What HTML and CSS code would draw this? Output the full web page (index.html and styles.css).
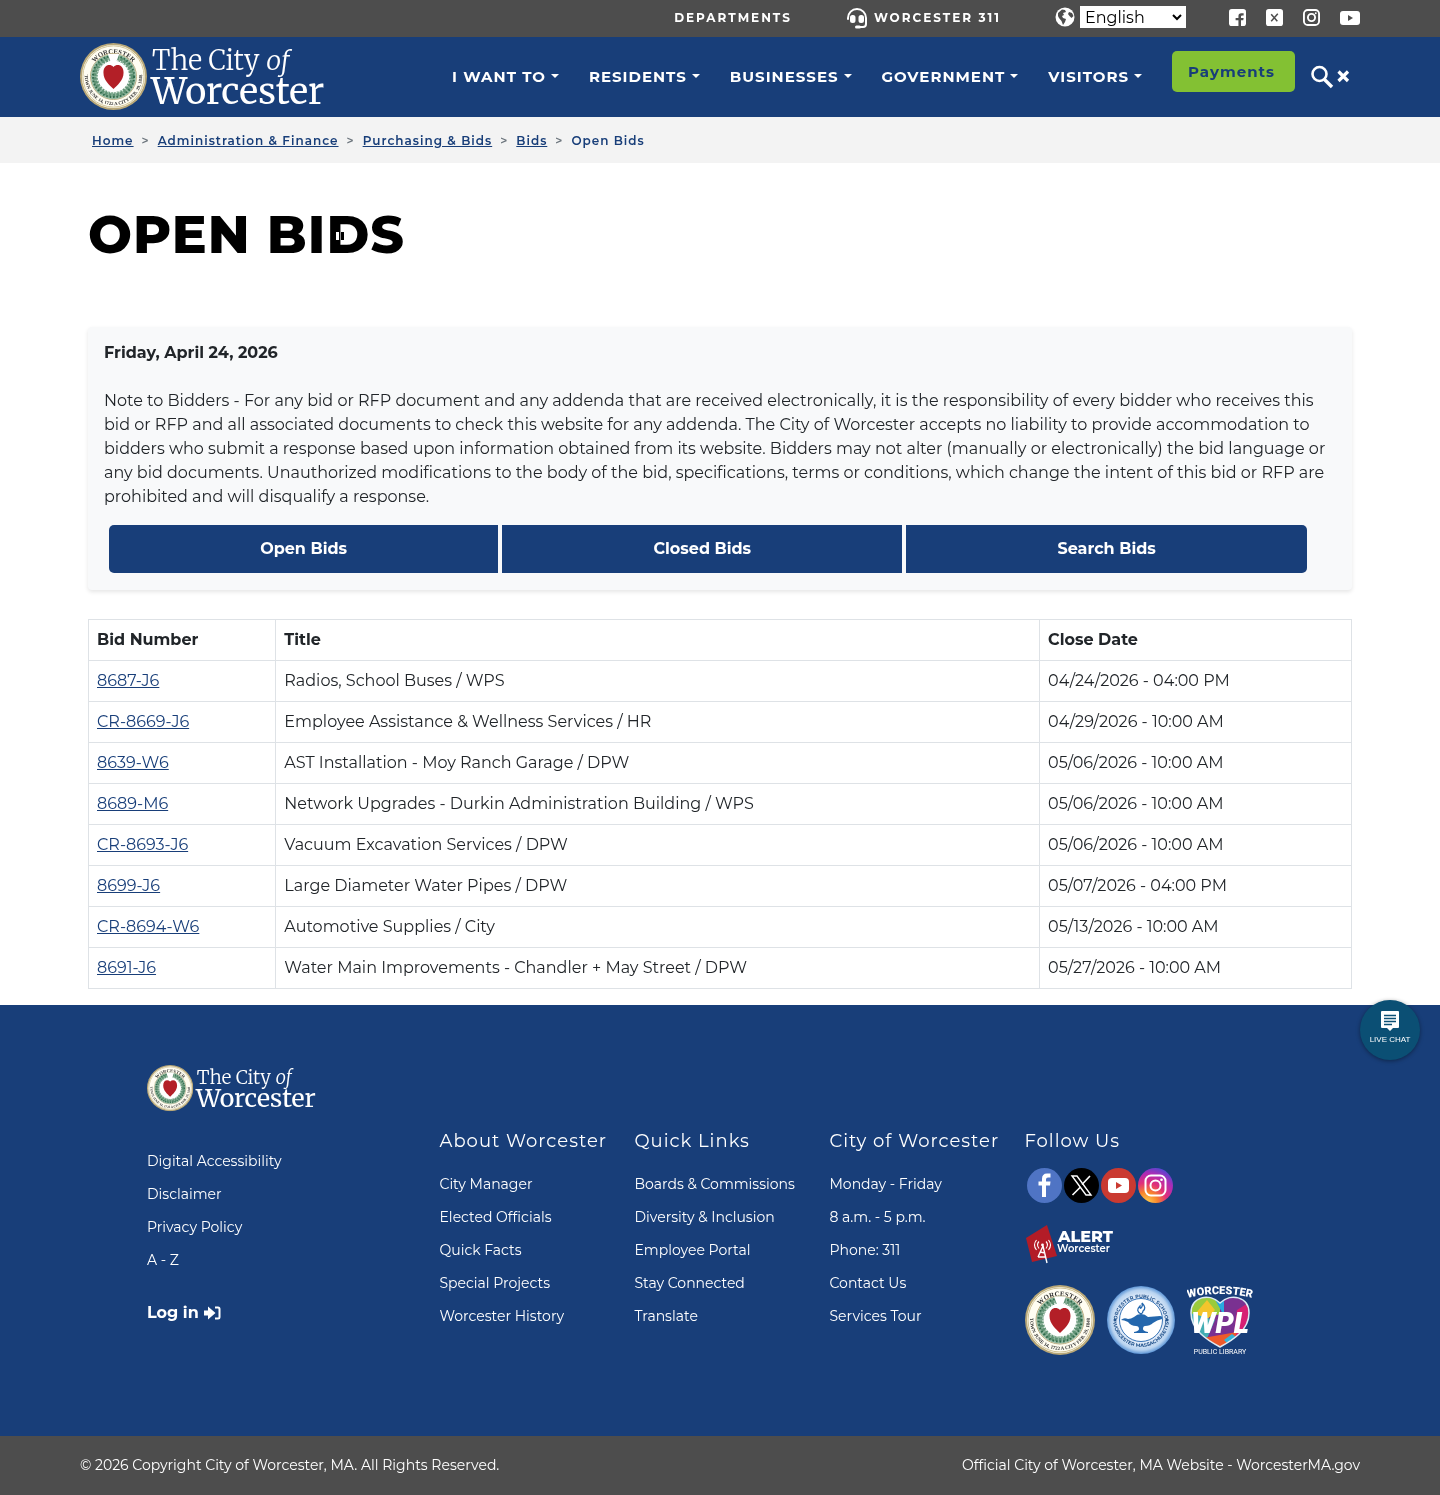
FILE: index.html
```html
<!DOCTYPE html>
<html lang="en">
<head>
  <meta charset="UTF-8">
  <meta name="viewport" content="width=device-width, initial-scale=1">
  <title>Open Bids | City of Worcester</title>
  <link rel="stylesheet" href="styles.css">
</head>
<body>

  <!-- Shared artwork -->
  <svg class="sprite" aria-hidden="true">
    <symbol id="seal" viewBox="0 0 70 70">
      <circle cx="35" cy="35" r="35" fill="#b9a878"/>
      <circle cx="35" cy="35" r="33" fill="#fffdf2"/>
      <circle cx="35" cy="35" r="32" fill="none" stroke="#cfc193" stroke-width="1"/>
      <path id="seal-top" d="M9 37 A26 26 0 1 1 61 37" fill="none"/>
      <path id="seal-bottom" d="M9 20 A30 30 0 1 0 61 20" fill="none"/>
      <text class="seal-text"><textPath href="#seal-top" startOffset="50%" text-anchor="middle">WORCESTER</textPath></text>
      <text class="seal-text seal-small"><textPath href="#seal-bottom" startOffset="50%" text-anchor="middle">TOWN JUNE 14, 1722 A CITY FEB. 29, 1848</textPath></text>
      <circle cx="35" cy="35" r="24" fill="#fff" stroke="#b9a878" stroke-width="1"/>
      <circle cx="35" cy="35" r="20" fill="none" stroke="#8fb59d" stroke-width="7"/>
      <circle cx="35" cy="35" r="19" fill="none" stroke="#5f9274" stroke-width="5" stroke-dasharray="2.6 1.4"/>
      <circle cx="35" cy="35" r="21.500" fill="none" stroke="#2f6a4b" stroke-width="2" stroke-dasharray="1.6 2"/>
      <circle cx="35" cy="35" r="17" fill="none" stroke="#dbe9df" stroke-width="1.500" stroke-dasharray="1.5 1.7"/>
      <path d="M29 11.500h12l-3 8h-6z" fill="#fff"/>
      <ellipse cx="35" cy="34.500" rx="14" ry="16" fill="#fff"/>
      <path d="M35 48c-4-4-10.500-9-10.500-17 0-8 6.500-10 10.500-6 4-4 10.500-2 10.500 6 0 8-6.500 13-10.500 17z" fill="#b31f27"/>
    </symbol>
    <symbol id="logo" viewBox="0 0 246 68">
      <use href="#seal" x="0" y="0" width="67" height="67"/>
      <text x="72" y="27" class="logo-text logo-city">The City <tspan font-style="italic">of</tspan></text>
      <text x="71" y="61" class="logo-text logo-name">Worcester</text>
    </symbol>
  </svg>

  <!-- Top bar -->
  <div class="topbar">
    <a class="top-link" href="#">DEPARTMENTS</a>
    <a class="top-link" href="#">
      <svg width="22" height="22" viewBox="0 0 22 22" fill="none" stroke="#fff" stroke-width="2">
        <path d="M2 12v-1a9 9 0 0 1 18 0v6q0 3-3 3h-5" stroke-linecap="round"/>
        <rect x="5" y="9" width="3.5" height="6" rx="1.5" fill="#fff"/>
        <rect x="13.5" y="9" width="3.5" height="6" rx="1.5" fill="#fff"/>
        <path d="M10.500 20h3" stroke-width="3" stroke-linecap="round"/>
      </svg>
      WORCESTER 311
    </a>
    <div class="language">
      <svg width="20" height="20" viewBox="0 0 20 20">
        <circle cx="10" cy="10" r="9.500" fill="#fff"/>
        <path d="M3 6l4-3.500 3 .5 1 2-3 1 1 2-2 1 1 2 3 1-1 3-2 3-1.500-4-2.500-3-1-2zM14 5l3 1 1.500 3-2 2-2-2-1.500-2z" fill="#4d4d4d"/>
      </svg>
      <select aria-label="Language">
        <option>English</option>
        <option>Español</option>
      </select>
    </div>
    <div class="top-social">
      <a href="#" aria-label="Facebook">
        <svg width="17" height="17" viewBox="0 0 18 18">
          <rect width="18" height="18" rx="3" fill="#fff"/>
          <path d="M10 18v-6H7V9.500h3V7.500Q10 4.500 13 4.500h2.500v2.300H14q-1.300 0-1.300 1v1.700h2.800l-.4 2.500h-2.400v6z" fill="#4d4d4d"/>
        </svg>
      </a>
      <a href="#" aria-label="X">
        <svg width="17" height="17" viewBox="0 0 18 18">
          <rect width="18" height="18" rx="3" fill="#fff"/>
          <path d="M5.500 5.500l6.500 7.500M12.500 5l-7 8" stroke="#4d4d4d" stroke-width="1.600"/>
        </svg>
      </a>
      <a href="#" aria-label="Instagram">
        <svg width="17" height="17" viewBox="0 0 18 18" fill="none" stroke="#fff">
          <rect x="1" y="1" width="16" height="16" rx="4" stroke-width="2"/>
          <circle cx="9" cy="9" r="3.800" stroke-width="2"/>
          <circle cx="13.500" cy="4.500" r="1" fill="#fff" stroke="none"/>
        </svg>
      </a>
      <a href="#" aria-label="YouTube">
        <svg width="20" height="17" viewBox="0 0 20 17">
          <rect y="2" width="20" height="14" rx="3" fill="#fff"/>
          <path d="M8 6l5 3-5 3z" fill="#4d4d4d"/>
        </svg>
      </a>
    </div>
  </div>

  <!-- Main navigation -->
  <header class="navbar">
    <a href="#" class="brand" aria-label="The City of Worcester"><svg class="logo"><use href="#logo"/></svg></a>
    <nav class="menu">
      <button type="button">I WANT TO</button>
      <button type="button">RESIDENTS</button>
      <button type="button">BUSINESSES</button>
      <button type="button">GOVERNMENT</button>
      <button type="button">VISITORS</button>
    </nav>
    <a class="payments" href="#">Payments</a>
    <button type="button" class="search" aria-label="Search">
      <svg width="39" height="24" viewBox="0 0 39 24" fill="none" stroke="#fff">
        <circle cx="8.500" cy="9" r="7" stroke-width="2.600"/>
        <path d="M13.500 14.500l7.500 7.500" stroke-width="3.300"/>
        <path d="M27.500 6.500l9.500 9.500M37 6.500l-9.500 9.500" stroke-width="3.200"/>
      </svg>
    </button>
  </header>

  <!-- Breadcrumbs -->
  <nav class="breadcrumb" aria-label="Breadcrumb">
    <a href="#">Home</a><i>&gt;</i>
    <a href="#">Administration &amp; Finance</a><i>&gt;</i>
    <a href="#">Purchasing &amp; Bids</a><i>&gt;</i>
    <a href="#">Bids</a><i>&gt;</i>
    <span>Open Bids</span>
  </nav>

  <main class="content">
    <div class="page-title">
      <h1>OPEN BIDS</h1>
      <button type="button" class="pause" aria-label="Pause"></button>
    </div>

    <section class="notice">
      <h2>Friday, April 24, 2026</h2>
      <p>Note to Bidders - For any bid or RFP document and any addenda that are received electronically, it is the responsibility of every bidder who receives this bid or RFP and all associated documents to check this website for any addenda. The City of Worcester accepts no liability to provide accommodation to bidders who submit a response based upon information obtained from its website. Bidders may not alter (manually or electronically) the bid language or any bid documents. Unauthorized modifications to the body of the bid, specifications, terms or conditions, which change the intent of this bid or RFP are prohibited and will disqualify a response.</p>
      <div class="bid-buttons">
        <a href="#">Open Bids</a>
        <a href="#">Closed Bids</a>
        <a href="#">Search Bids</a>
      </div>
    </section>

    <table class="bids">
      <thead>
        <tr><th>Bid Number</th><th>Title</th><th>Close Date</th></tr>
      </thead>
      <tbody>
        <tr><td><a href="#">8687-J6</a></td><td>Radios, School Buses / WPS</td><td>04/24/2026 - 04:00 PM</td></tr>
        <tr><td><a href="#">CR-8669-J6</a></td><td>Employee Assistance &amp; Wellness Services / HR</td><td>04/29/2026 - 10:00 AM</td></tr>
        <tr><td><a href="#">8639-W6</a></td><td>AST Installation - Moy Ranch Garage / DPW</td><td>05/06/2026 - 10:00 AM</td></tr>
        <tr><td><a href="#">8689-M6</a></td><td>Network Upgrades - Durkin Administration Building / WPS</td><td>05/06/2026 - 10:00 AM</td></tr>
        <tr><td><a href="#">CR-8693-J6</a></td><td>Vacuum Excavation Services / DPW</td><td>05/06/2026 - 10:00 AM</td></tr>
        <tr><td><a href="#">8699-J6</a></td><td>Large Diameter Water Pipes / DPW</td><td>05/07/2026 - 04:00 PM</td></tr>
        <tr><td><a href="#">CR-8694-W6</a></td><td>Automotive Supplies / City</td><td>05/13/2026 - 10:00 AM</td></tr>
        <tr><td><a href="#">8691-J6</a></td><td>Water Main Improvements - Chandler + May Street / DPW</td><td>05/27/2026 - 10:00 AM</td></tr>
      </tbody>
    </table>
  </main>

  <footer class="footer">
    <button type="button" class="live-chat">
      <svg width="20" height="20" viewBox="0 0 20 20">
        <path d="M2 0h16q1 0 1 1v15q0 1-1 1h-5l-3 3-3-3H2q-1 0-1-1V1q0-1 1-1z" fill="#fff"/>
        <path d="M4 4.500h12M4 7.500h12M4 10.500h12M4 13.500h8" stroke="#0b4f74" stroke-width="1.300"/>
      </svg>
      LIVE CHAT
    </button>

    <div class="footer-grid">
      <div class="footer-first">
        <svg class="footer-logo" role="img" aria-label="The City of Worcester"><use href="#logo"/></svg>
        <ul>
          <li><a href="#">Digital Accessibility</a></li>
          <li><a href="#">Disclaimer</a></li>
          <li><a href="#">Privacy Policy</a></li>
          <li><a href="#">A - Z</a></li>
        </ul>
        <a class="login" href="#">Log in
          <svg width="17" height="14" viewBox="0 0 17 14">
            <path d="M0 4.500h4V.5L11.500 7 4 13.500v-4H0z" fill="#fff"/>
            <path d="M11 1.500h3q1.500 0 1.500 1.500v8q0 1.500-1.500 1.500h-3" fill="none" stroke="#fff" stroke-width="2"/>
          </svg>
        </a>
      </div>
      <div class="footer-col">
        <h3>About Worcester</h3>
        <ul>
          <li><a href="#">City Manager</a></li>
          <li><a href="#">Elected Officials</a></li>
          <li><a href="#">Quick Facts</a></li>
          <li><a href="#">Special Projects</a></li>
          <li><a href="#">Worcester History</a></li>
        </ul>
      </div>
      <div class="footer-col">
        <h3>Quick Links</h3>
        <ul>
          <li><a href="#">Boards &amp; Commissions</a></li>
          <li><a href="#">Diversity &amp; Inclusion</a></li>
          <li><a href="#">Employee Portal</a></li>
          <li><a href="#">Stay Connected</a></li>
          <li><a href="#">Translate</a></li>
        </ul>
      </div>
      <div class="footer-col">
        <h3>City of Worcester</h3>
        <ul>
          <li>Monday - Friday</li>
          <li>8 a.m. - 5 p.m.</li>
          <li>Phone: 311</li>
          <li><a href="#">Contact Us</a></li>
          <li><a href="#">Services Tour</a></li>
        </ul>
      </div>
      <div class="footer-col">
        <h3>Follow Us</h3>
        <div class="follow">
          <a href="#" aria-label="Facebook">
            <svg width="35" height="35" viewBox="0 0 35 35">
              <circle cx="17.500" cy="17.500" r="17.500" fill="#4f74c4"/>
              <path d="M15 29V17.500h-3.500v-4H15V11q0-5.500 5-5.500h3.500v4H21q-2 0-2 2v2h4.500l-.5 4h-4V29z" fill="#fff"/>
            </svg>
          </a>
          <a href="#" aria-label="X">
            <svg width="35" height="35" viewBox="0 0 35 35" fill="none" stroke="#fff">
              <circle cx="17.500" cy="17.500" r="17.500" fill="#000" stroke="none"/>
              <path d="M8 8h5l14 19h-5z" stroke-width="1.400"/>
              <path d="M26 8l-8 8.500M16.500 19L8.500 27" stroke-width="1.600"/>
            </svg>
          </a>
          <a href="#" aria-label="YouTube">
            <svg width="35" height="35" viewBox="0 0 35 35">
              <circle cx="17.500" cy="17.500" r="17.500" fill="#ca3a31"/>
              <rect x="7" y="10" width="21" height="15" rx="4" fill="#fff"/>
              <path d="M15 14l6 3.500-6 3.500z" fill="#ca3a31"/>
            </svg>
          </a>
          <a href="#" aria-label="Instagram">
            <svg width="35" height="35" viewBox="0 0 35 35" fill="none" stroke="#fff">
              <defs>
                <radialGradient id="insta" cx=".25" cy="1" r="1.050">
                  <stop offset="0" stop-color="#ffd34f"/>
                  <stop offset=".3" stop-color="#f8842c"/>
                  <stop offset=".55" stop-color="#e0307a"/>
                  <stop offset=".8" stop-color="#b02bb4"/>
                  <stop offset="1" stop-color="#5a45d0"/>
                </radialGradient>
              </defs>
              <circle cx="17.500" cy="17.500" r="17.500" fill="url(#insta)" stroke="none"/>
              <rect x="7.500" y="7.500" width="20" height="20" rx="5.500" stroke-width="2"/>
              <circle cx="17.500" cy="17.500" r="5" stroke-width="2"/>
              <circle cx="23.500" cy="11.800" r="1.300" fill="#fff" stroke="none"/>
            </svg>
          </a>
        </div>
        <a class="alert" href="#" aria-label="Alert Worcester">
          <svg width="90" height="40" viewBox="0 0 90 40">
            <path d="M20 1l10 31-25 6L-1 14z" fill="#b31c27"/>
            <path d="M16 22l-5 11M16 22l4 17M13 28l5 1M11 33l7 0" stroke="#fff" stroke-width="1.400"/>
            <circle cx="15.500" cy="21" r="1.400" fill="#fff"/>
            <path d="M12 24.500q-3-4 0-7M9.500 26q-4-5 0-10M19 24.500q3-4 0-7M21.500 26q4-5 0-10" fill="none" stroke="#fff" stroke-width="1.100"/>
            <text x="31" y="18" class="mark-text alert-title">ALERT</text>
            <text x="30" y="28" class="mark-text alert-name">Worcester</text>
          </svg>
        </a>
        <div class="partners">
          <a href="#" aria-label="City seal"><svg width="70" height="70"><use href="#seal"/></svg></a>
          <a href="#" aria-label="Worcester Public Schools">
            <svg width="68" height="68" viewBox="0 0 68 68">
              <defs>
                <radialGradient id="school-ring">
                  <stop offset=".7" stop-color="#dfeaf8"/>
                  <stop offset=".88" stop-color="#b8d3f0"/>
                  <stop offset="1" stop-color="#5e96d6"/>
                </radialGradient>
              </defs>
              <circle cx="34" cy="34" r="34" fill="url(#school-ring)"/>
              <path id="wps-top" d="M10 36a24 24 0 1 1 48 0" fill="none"/>
              <path id="wps-bottom" d="M6 33a28 28 0 0 0 56 0" fill="none"/>
              <text class="school-text"><textPath href="#wps-top" startOffset="50%" text-anchor="middle">WORCESTER PUBLIC SCHOOLS</textPath></text>
              <text class="school-text"><textPath href="#wps-bottom" startOffset="50%" text-anchor="middle">WORCESTER MASSACHUSETTS</textPath></text>
              <circle cx="34" cy="34" r="21.500" fill="#fff" stroke="#3975b7" stroke-width="1"/>
              <circle cx="8" cy="34" r="1.500" fill="#24558e"/>
              <circle cx="60" cy="34" r="1.500" fill="#24558e"/>
              <path d="M14 34q3-3 7-1 3 0 6-2 3-3 7-3t7 3l12-1q3 0 2 3-5 1-9 4-3 3-8 3-2 0-2 3 0 2 5 3v1H27v-1q5-1 5-3 0-3-3-3-5 0-8-4-4-2-7-2z" fill="#2467ad"/>
              <path d="M34 28q-6-3-1-8 0 3 1 2 2-2 1-5 5 5 1 8 0 2-2 3z" fill="none" stroke="#2467ad" stroke-width="1.300"/>
            </svg>
          </a>
          <a href="#" aria-label="Worcester Public Library">
            <svg width="66" height="72" viewBox="0 0 66 72">
              <defs>
                <clipPath id="heart"><path d="M33 63C20 56 4 46 4 29 4 12 23 9 33 19 43 9 62 12 62 29 62 46 46 56 33 63z"/></clipPath>
                <path id="wpl-arc" d="M0 14q33-8 66 0"/>
              </defs>
              <g clip-path="url(#heart)">
                <path d="M0 8h66v60H0z" fill="#7a3191"/>
                <path d="M0 8h33v22L0 40z" fill="#9acb3c"/>
                <path d="M8 30l12-14 8 10-8 10z" fill="#f4c52c"/>
                <path d="M24 8h13v24z" fill="#29a9df"/>
                <path d="M0 28l28 8-12 28H0z" fill="#43aeb4"/>
                <path d="M50 26l16-10v40H46z" fill="#d71f73"/>
                <path d="M16 54l34-6-8 20H24z" fill="#ee5a2b"/>
                <path d="M37 56l8-6 8 6-8 8z" fill="#35b4d8"/>
              </g>
              <path d="M33 63C20 56 4 46 4 29 4 12 23 9 33 19 43 9 62 12 62 29 62 46 46 56 33 63z" fill="none" stroke="#dcebf5" stroke-width="1.500"/>
              <text class="mark-text library-name"><textPath href="#wpl-arc" startOffset="50%" text-anchor="middle">WORCESTER</textPath></text>
              <text x="33" y="49" text-anchor="middle" class="mark-text library-initials">WPL</text>
              <text x="33" y="70" text-anchor="middle" class="mark-text library-small">PUBLIC LIBRARY</text>
            </svg>
          </a>
        </div>
      </div>
    </div>
  </footer>

  <div class="copyright">
    <span>© 2026 Copyright City of Worcester, MA. All Rights Reserved.</span>
    <span>Official City of Worcester, MA Website - WorcesterMA.gov</span>
  </div>

</body>
</html>
```

FILE: styles.css
```css
* {
  box-sizing: border-box;
}

body {
  margin: 0;
  font-family: Montserrat, Inter, "Open Sans", sans-serif;
  font-size: 16px;
  line-height: 24px;
  color: #212529;
  background-color: #fff;
}

button {
  font-family: inherit;
  border: none;
  background: none;
  padding: 0;
  cursor: pointer;
}

a {
  color: #183e79;
}

svg {
  display: block;
  flex: none;
}

ul {
  list-style: none;
  margin: 0;
  padding: 0;
}

.sprite {
  position: absolute;
  width: 0;
  height: 0;
}

.seal-text {
  font-family: "Liberation Serif", serif;
  font-size: 7px;
  font-weight: bold;
  fill: #333;
}

.seal-small {
  font-size: 5px;
}

.logo-text {
  font-family: Merriweather, "Liberation Serif", serif;
  fill: #fff;
}

.logo-city {
  font-size: 27px;
  font-weight: 300;
}

.logo-name {
  font-size: 36px;
}

/* Top bar */
.topbar {
  display: flex;
  justify-content: flex-end;
  align-items: center;
  gap: 54px;
  height: 37px;
  padding: 0 80px 2px;
  background-color: #4d4d4d;
}

.top-link {
  display: flex;
  align-items: center;
  gap: 6px;
  color: #fff;
  font-size: 12px;
  font-weight: 700;
  letter-spacing: 2px;
  text-decoration: none;
}

.language {
  display: flex;
  align-items: center;
  gap: 5px;
  padding-bottom: 2px;
}

.language select {
  width: 106px;
  height: 22px;
  padding: 0;
  border: 1px solid #fff;
  border-radius: 0;
  background-color: #fff;
  color: #000;
  font-family: inherit;
  font-size: 16px;
}

.top-social {
  display: flex;
  gap: 20px;
  margin-left: -11px;
}

/* Navigation */
.navbar {
  display: flex;
  align-items: center;
  height: 80px;
  padding: 0 90px 0 80px;
  background-color: #183e79;
}

.brand {
  margin-right: auto;
}

.logo {
  width: 246px;
  height: 68px;
}

.menu {
  display: flex;
  justify-content: space-between;
  flex: 0 1 690px;
  padding-bottom: 2px;
}

.menu button {
  display: flex;
  align-items: center;
  gap: 5px;
  color: #fff;
  font-size: 15px;
  font-weight: 700;
  letter-spacing: 1px;
}

.menu button::after {
  content: "";
  border-top: 4px solid #fff;
  border-left: 4px solid transparent;
  border-right: 4px solid transparent;
}

.payments {
  margin: 0 16px 11px 30px;
  padding: 9px 20px 8px 16px;
  border-radius: 5px;
  background-color: #83c133;
  color: #183e79;
  font-size: 15px;
  font-weight: 700;
  letter-spacing: 1px;
  text-decoration: none;
}

/* Breadcrumb */
.breadcrumb {
  display: flex;
  align-items: center;
  height: 46px;
  padding: 1px 92px 0;
  background-color: #f3f3f3;
  color: #183e79;
  font-size: 12px;
  font-weight: 600;
  letter-spacing: 1px;
}

.breadcrumb i {
  margin: 0 8px;
  color: #6c757d;
  font-style: normal;
}

/* Content */
.content {
  padding: 32px 88px 16px;
}

.page-title {
  position: relative;
  margin-bottom: 52px;
}

h1 {
  margin: 0;
  color: #000;
  font-size: 52px;
  font-weight: 800;
  line-height: 80px;
  letter-spacing: 1px;
}

.pause {
  position: absolute;
  top: 37px;
  left: 248px;
  width: 8px;
  height: 8px;
  border-left: 3px solid #fff;
  border-right: 3px solid #fff;
  mix-blend-mode: difference;
}

.notice {
  padding: 14px 16px 17px;
  background-color: #f8f9fa;
  border-radius: 4px;
  box-shadow: 0 2px 4px rgba(0, 0, 0, 0.1);
}

.notice h2 {
  margin: 0 0 24px;
  font-size: 16px;
  font-weight: 700;
  line-height: 24px;
}

.notice p {
  margin: 0;
}

.bid-buttons {
  display: flex;
  gap: 4px;
  margin: 16px 29px 0 5px;
  border-radius: 5px;
  overflow: hidden;
}

.bid-buttons a {
  flex: 1 1 auto;
  padding: 12px;
  background-color: #183e79;
  color: #fff;
  font-weight: 700;
  text-align: center;
  text-decoration: none;
}

.bids {
  width: 100%;
  margin-top: 29px;
  border-collapse: collapse;
}

.bids th,
.bids td {
  padding: 8px;
  border: 1px solid #dee2e6;
  text-align: left;
}

/* Footer */
.footer {
  position: relative;
  padding: 60px 0 80px;
  background-color: #183e79;
  color: #fff;
}

.footer a {
  color: #fff;
  text-decoration: none;
}

.footer-grid {
  display: grid;
  grid-template-columns: 3fr 2fr 2fr 2fr 3fr;
  max-width: 1170px;
  margin: 0 auto;
}

.footer-grid > div {
  padding-left: 12px;
}

.footer-col {
  padding-top: 64px;
}

.footer-logo {
  width: 170px;
  height: 47px;
  margin-bottom: 37px;
}

.footer li {
  margin-bottom: 9px;
  font-size: 14px;
}

.footer h3 {
  margin: 0 0 19px;
  font-size: 18px;
  font-weight: 400;
  line-height: 24px;
  letter-spacing: 1px;
}

.footer .login {
  display: flex;
  align-items: center;
  gap: 5px;
  margin-top: 29px;
  font-weight: 700;
}

.follow {
  display: flex;
  gap: 2px;
  margin: -4px 0 21px 2px;
}

.alert {
  display: block;
  width: fit-content;
  margin: 0 0 20px 2px;
}

.alert svg {
  overflow: visible;
}

.partners {
  display: flex;
  align-items: center;
  gap: 12px;
}

.mark-text {
  fill: #fff;
}

.alert-title {
  font-size: 16px;
  font-weight: 800;
}

.alert-name {
  font-size: 10px;
  font-weight: 600;
}

.school-text {
  font-size: 5px;
  font-weight: 700;
  fill: #24558e;
}

.library-name {
  font-family: Roboto, sans-serif;
  font-size: 11px;
  font-weight: 900;
}

.library-initials {
  font-family: Roboto, sans-serif;
  font-size: 29px;
  font-weight: 900;
  font-style: italic;
}

.library-small {
  font-family: Roboto, sans-serif;
  font-size: 7px;
}

.live-chat {
  position: absolute;
  top: -5px;
  right: 20px;
  display: flex;
  flex-direction: column;
  align-items: center;
  width: 60px;
  height: 60px;
  padding-top: 11px;
  border-radius: 50%;
  background-color: #0b4f74;
  box-shadow: 0 1px 4px rgba(0, 0, 0, 0.4);
  color: #fff;
  font-family: "Liberation Sans", sans-serif;
  font-size: 8px;
  line-height: 17px;
}

.copyright {
  display: flex;
  justify-content: space-between;
  padding: 17px 80px 18px;
  background-color: #4d4d4d;
  color: #fff;
  font-size: 14px;
}
```
